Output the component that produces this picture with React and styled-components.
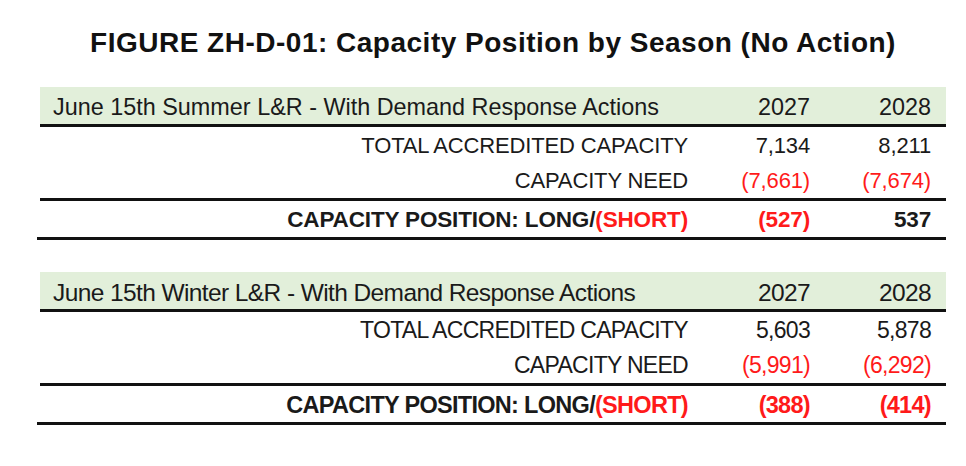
import React from "react";
import styled, { createGlobalStyle } from "styled-components";

const Global = createGlobalStyle`
  html, body { margin: 0; padding: 0; background: #ffffff; }
  body { font-family: "Liberation Sans", Arial, sans-serif; color: #1f1f1f; }
`;

const Page = styled.div`
  width: 966px;
  height: 466px;
  box-sizing: border-box;
  padding: 27px 20px 0 40px;
`;

const Title = styled.h1`
  margin: 0 0 28px 0;
  width: 906px;
  text-align: center;
  font-family: "Liberation Sans", Arial, sans-serif;
  font-weight: 700;
  font-size: 28px;
  letter-spacing: 0.5px;
  line-height: 32px;
  color: #111;
  white-space: nowrap;
`;

const Table = styled.div`
  width: 906px;
  display: grid;
  grid-template-columns: 648px 122px 121px 15px;
  margin-bottom: ${(p) => p.$gap || 0}px;
  font-size: ${(p) => (p.$tall ? 23 : 22)}px;
  letter-spacing: ${(p) => (p.$tall ? -0.7 : -0.15)}px;
`;

const HeaderRow = styled.div`
  grid-column: 1 / -1;
  display: grid;
  grid-template-columns: subgrid;
  background: #e2efda;
  border-bottom: 3px solid #111;
  padding-top: 4px;
  line-height: 33px;
  font-size: ${(p) => (p.$tall ? 24.5 : 23.4)}px;
  letter-spacing: ${(p) => (p.$tall ? -0.6 : 0)}px;
`;

const HeaderLabel = styled.div`
  padding-left: 13px;
  white-space: nowrap;
  color: #1a1a1a;
`;

const Row = styled.div`
  grid-column: 1 / -1;
  display: grid;
  grid-template-columns: subgrid;
  line-height: 35px;
  padding-top: ${(p) => p.$pt || 0}px;
  ${(p) => p.$rule && `border-bottom: 3px solid #111;`}
`;

const TotalRow = styled.div`
  grid-column: 1 / -1;
  display: grid;
  grid-template-columns: subgrid;
  padding-top: 2px;
  line-height: 34px;
  font-weight: 700;
  font-size: ${(p) => (p.$tall ? 23.5 : 22.5)}px;
  border-bottom: 3px solid #111;
  margin-left: -3px;
  padding-left: 3px;
  & > *:first-child { margin-left: -3px; }
`;

const Label = styled.div`
  text-align: right;
  white-space: nowrap;
  color: #1a1a1a;
`;

const Cell = styled.div`
  text-align: right;
  white-space: nowrap;
  color: ${(p) => (p.$neg ? "#ff1a1a" : "#1a1a1a")};
`;

const Red = styled.span`
  color: #ff1a1a;
`;

const Spacer = styled.div``;

function Section({ season, data, tall, gap }) {
  return (
    <Table $tall={tall} $gap={gap}>
      <HeaderRow $tall={tall}>
        <HeaderLabel>June 15th {season} L&amp;R - With Demand Response Actions</HeaderLabel>
        <Cell>2027</Cell>
        <Cell>2028</Cell>
        <Spacer />
      </HeaderRow>
      <Row $pt={1}>
        <Label>TOTAL ACCREDITED CAPACITY</Label>
        <Cell>{data.total[0]}</Cell>
        <Cell>{data.total[1]}</Cell>
        <Spacer />
      </Row>
      <Row $rule>
        <Label>CAPACITY NEED</Label>
        <Cell $neg>{data.need[0]}</Cell>
        <Cell $neg>{data.need[1]}</Cell>
        <Spacer />
      </Row>
      <TotalRow $tall={tall}>
        <Label>
          CAPACITY POSITION: LONG/<Red>(SHORT)</Red>
        </Label>
        <Cell $neg={data.pos[0].startsWith("(")}>{data.pos[0]}</Cell>
        <Cell $neg={data.pos[1].startsWith("(")}>{data.pos[1]}</Cell>
        <Spacer />
      </TotalRow>
    </Table>
  );
}

export default function App() {
  return (
    <>
      <Global />
      <Page>
        <Title>FIGURE ZH-D-01: Capacity Position by Season (No Action)</Title>
        <Section
          season="Summer"
          gap={32}
          data={{ total: ["7,134", "8,211"], need: ["(7,661)", "(7,674)"], pos: ["(527)", "537"] }}
        />
        <Section
          season="Winter"
          tall
          data={{ total: ["5,603", "5,878"], need: ["(5,991)", "(6,292)"], pos: ["(388)", "(414)"] }}
        />
      </Page>
    </>
  );
}
